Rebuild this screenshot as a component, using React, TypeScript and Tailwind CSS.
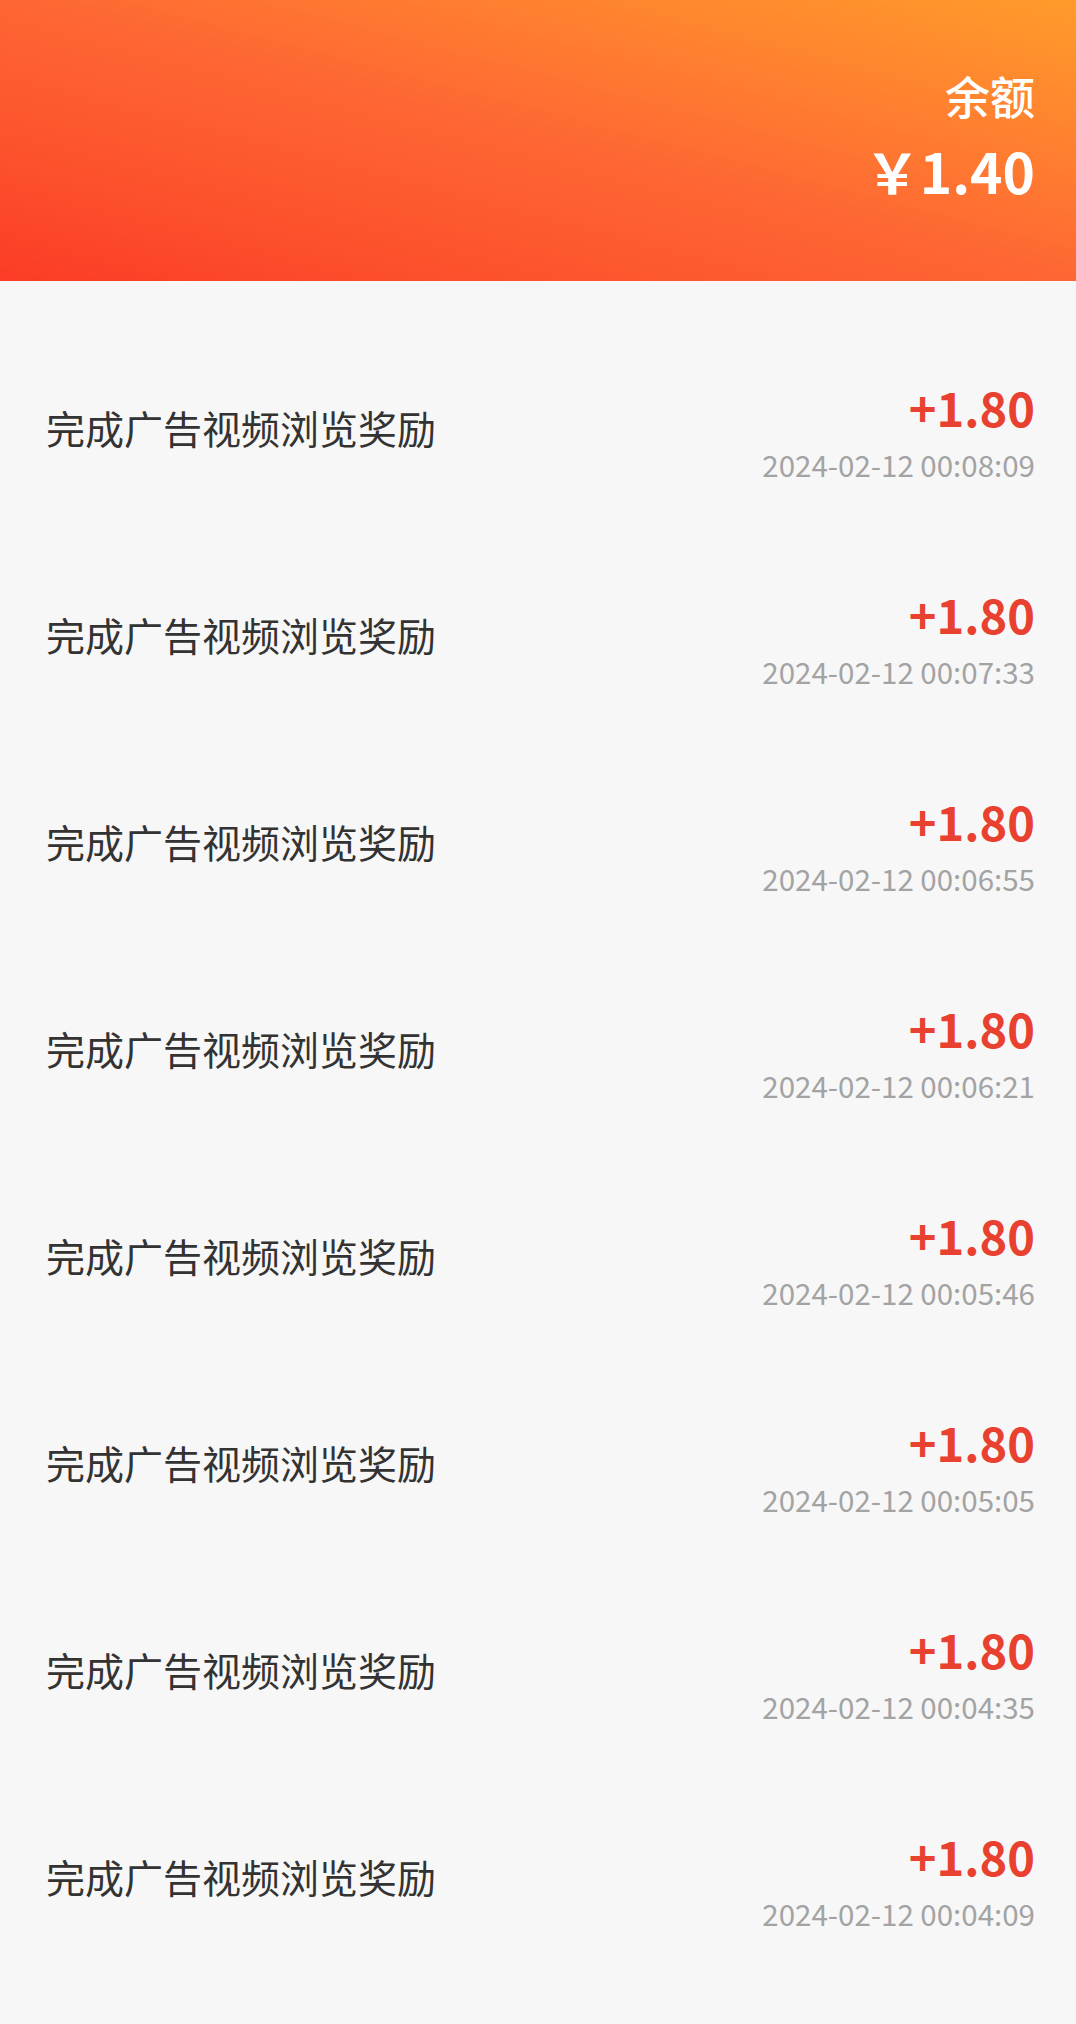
const records = [
  "2024-02-12 00:08:09",
  "2024-02-12 00:07:33",
  "2024-02-12 00:06:55",
  "2024-02-12 00:06:21",
  "2024-02-12 00:05:46",
  "2024-02-12 00:05:05",
  "2024-02-12 00:04:35",
  "2024-02-12 00:04:09",
];

const font = { fontFamily: '"Noto Sans CJK SC", "Noto Sans", sans-serif' };

export default function App() {
  return (
    <div className="min-h-[2024px] w-[1076px] bg-[#f7f7f7]" style={font}>
      <div className="h-[281px] bg-linear-to-tr from-[#fb3b26] via-[#fe6633] to-[#ff9b2a] flex flex-col items-end pr-[41px] pt-[66px]">
        <div className="text-[45px] leading-[60px] font-medium text-white">余额</div>
        <div className="mt-[12px] text-[55px] leading-[64px] font-bold text-white">￥1.40</div>
      </div>
      <div className="pt-[42px]">
        {records.map((time) => (
          <div key={time} className="h-[207px] flex items-center justify-between pl-[46px] pr-[41px] pb-[2px]">
            <div className="mt-[2px] text-[39px] leading-[50px] text-[#333333]">完成广告视频浏览奖励</div>
            <div className="flex flex-col items-end mt-[12px]">
              <div className="text-[47px] leading-[50px] font-bold text-[#e8412f]">+1.80</div>
              <div className="mt-[15px] text-[29.5px] leading-[34px] text-[#a3a3a3]">{time}</div>
            </div>
          </div>
        ))}
      </div>
    </div>
  );
}
